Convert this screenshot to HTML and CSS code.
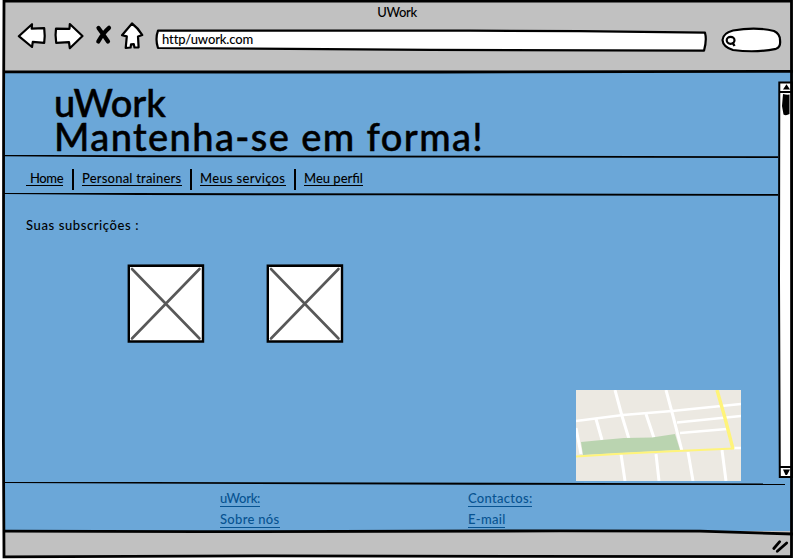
FILE: index.html
```html
<!DOCTYPE html>
<html lang="pt">
<head>
<meta charset="utf-8">
<title>UWork</title>
<link rel="stylesheet" href="styles.css">
</head>
<body>
<div class="window">
  <header class="chrome">
    <div class="title">UWork</div>
    <div class="toolbar">
      <svg class="nav-icons" width="130" height="30" viewBox="16 21 130 30">
        <g fill="#fff" stroke="#000" stroke-width="2.2" stroke-linejoin="round">
          <path d="M18.8 36.2 32 24.2 31.7 28.7 44.2 28.2Q45.2 36 44.2 42.8L32.8 41.8 32 47Z"/>
          <path d="M56 28.7 69.5 28.8 69.8 24 82.5 36 69.8 48.2 69 42.2 56.2 42.8Q55 35 56 28.7Z"/>
          <path d="M132 23.5Q138 28 142.3 35L138 36.5 138.6 47.3 134.5 47.5 133.8 44.2 131 44.3 130.6 47.5 125.7 48 126.8 36.4 122 35.2Z"/>
        </g>
        <path d="M98.5 28Q103 34 108 41.5M109 27.8Q103 33 98.3 41.5" fill="none" stroke="#000" stroke-width="4.2" stroke-linecap="round"/>
      </svg>
      <div class="url">
        <svg class="shape" width="554" height="26" viewBox="154 27 554 26"><path d="M158 30.7 H470 L580 31.2 705 32.7Q707 40 704 50.7L430 49.8 158 48Q155 39 158 30.7Z" fill="#fff" stroke="#000" stroke-width="2.2" stroke-linejoin="round"/></svg>
        <span>http/uwork.com</span>
      </div>
      <svg class="search" width="62" height="28" viewBox="720 26 62 28">
        <path d="M733 30.5Q756 26.5 774 31Q780 34 780 40 781 47 776 48.8 756 53 733 50 723 47 722.5 40 723 33 733 30.5Z" fill="#fff" stroke="#000" stroke-width="2.2"/>
        <ellipse cx="730.6" cy="40.3" rx="3.9" ry="3.5" fill="none" stroke="#000" stroke-width="2.2"/><path d="M732.5 42.5 734.5 46" stroke="#000" stroke-width="2.4"/>
      </svg>
    </div>
  </header>
  <div class="viewport">
    <main class="page">
      <h1><span class="brand">uWork</span><br>Mantenha-se em forma!</h1>
      <svg class="rule" width="774" height="4" viewBox="5 154 774 4"><path d="M5 155H40L780 156.3V158L400 157.4 140 157.2 5 156.2Z"/></svg>
      <nav>
        <a class="home">Home</a><i></i><a class="trainers">Personal trainers</a><i></i><a class="services">Meus serviços</a><i></i><a class="profile">Meu perfil</a>
      </nav>
      <svg class="rule" width="774" height="4" viewBox="5 192 774 4"><path d="M5 193H130L780 194V195.8L400 195.3 140 195 5 194.1Z"/></svg>
      <p>Suas subscrições :</p>
      <div class="pictures">
        <svg width="78" height="80" viewBox="0 0 78 80"><path d="M1.8 1.8 76 1.5 76 77.5H1.8Z" fill="#fff" stroke="#000" stroke-width="2.4"/><path d="M5 5 72.5 74.5M72.5 5 5 74.5" stroke="#585858" stroke-width="2.6" stroke-linecap="round"/></svg>
        <svg width="78" height="80" viewBox="0 0 78 80"><path d="M1.8 1.8 76 1.5 76 77.5H1.8Z" fill="#fff" stroke="#000" stroke-width="2.4"/><path d="M5 5 72.5 74.5M72.5 5 5 74.5" stroke="#585858" stroke-width="2.6" stroke-linecap="round"/></svg>
      </div>
      <svg class="map" width="165" height="91" viewBox="0 0 165 91">
        <rect width="165" height="91" fill="#ece9e2"/>
        <g fill="none" stroke="#fff" stroke-width="3">
          <path stroke-width="2.3" d="M0 31 47 25 96 21 165 14M101 32.5 165 26M104 43 151 39M158 58H165"/>
          <path d="M39 0 46 26 53 49M90 0 97 26 106 61M20 29 26 50M70 24 78 48M0 38 5 64M45 64 49 91M80 64 83 91M112 62 117 91M146 60 150 91"/>
        </g>
        <path d="M5 52 26 50 48 48 76 47.5 99 44 104 60 7 65Z" fill="#bad4b0"/>
        <path d="M0 66.5 40 64 90 61.5 158 58.5" fill="none" stroke="#fff47a" stroke-width="2.2"/>
        <path d="M141 0 149 28 157 59" fill="none" stroke="#fff47a" stroke-width="3.4"/>
      </svg>
    </main>
    <svg class="scrollbar" width="15" height="399" viewBox="778 80 15 399">
      <path d="M779.3 82.5H792V477H779.8L779 280Z" fill="#fff" stroke="#000" stroke-width="2"/>
      <path d="M779 92H792M779 467H792" stroke="#000" stroke-width="1.8"/>
      <path d="M783 89.5 786.5 84.2 790 89.5ZM783 469.5H790L787 475H785.5Z"/>
      <path d="M783 94Q787 95 789.5 94.5V114Q786 116 783.5 114.5L782 106Z"/>
    </svg>
  </div>
  <footer>
    <svg class="rule" width="782" height="4" viewBox="5 481 782 4"><path d="M5 482H150L786 483.5V485L480 484.7 5 483Z"/></svg>
    <div class="links">
      <div><a class="about">uWork:</a><a class="us">Sobre nós</a></div>
      <div><a class="contacts">Contactos:</a><a class="mail">E-mail</a></div>
    </div>
  </footer>
  <div class="status"><svg width="18" height="15" viewBox="771 539 18 15"><path d="M773.8 548.5 779.7 541.7M777.3 551.3 786.7 543" fill="none" stroke="#000" stroke-width="2.8" stroke-linecap="round"/></svg></div>
  <svg class="outline" width="793" height="559" viewBox="0 0 793 559">
    <g fill="none" stroke="#000" stroke-width="2.8">
      <path d="M4 1.2H791.5L791.6 280 791.5 556.6 520 556.4 270 555.8 4 556.8 3.4 440 3.6 100Z"/>
      <path d="M4 71.8 250 72 440 72 793 71.4M4 531.2 200 531.7 560 530.9 700 531.1 793 534"/>
    </g>
  </svg>
</div>
</body>
</html>
```

FILE: styles.css
```css
* { box-sizing: border-box; }
body { margin: 0; background: #fff; color: #000; font: 500 13px/16px Lato, "Noto Sans", sans-serif; }
svg { display: block; flex: none; }
.window { position: relative; width: 793px; height: 559px; display: flex; flex-direction: column; overflow: hidden; }
.chrome { height: 72px; margin-left: 4px; background: #c1c1c1; }
.title { height: 21px; padding: 4px 3px 0 0; text-align: center; letter-spacing: -.3px; }
.toolbar { display: flex; padding-left: 12px; }
.url { position: relative; width: 554px; height: 26px; margin: 6px 12px 0 8px; }
.url .shape { position: absolute; inset: 0; }
.url span { position: relative; display: block; padding: 4px 0 0 8px; letter-spacing: -.13px; }
.search { margin-top: 5px; }
.viewport { display: flex; height: 409px; margin-left: 4px; background: #6ba7d8; }
.page { width: 774px; display: flex; flex-direction: column; }
h1 { height: 82px; margin: 0; padding: 13px 0 0 50px; font-size: 38px; line-height: 34px; font-weight: 500; letter-spacing: 1.4px; white-space: nowrap; -webkit-text-stroke: .5px #000; }
.brand { letter-spacing: -.1px; }
.rule { width: auto; align-self: flex-start; }
nav { display: flex; height: 34px; padding: 11px 0 0 22px; }
nav i { width: 2px; height: 21px; background: #000; margin: 0 8px; }
nav a { height: 17px; line-height: 18px; border-bottom: 1px solid #000; white-space: nowrap; letter-spacing: .3px; }
.home { width: 37px; padding-left: 4px; margin-right: 1px; }
nav .home { letter-spacing: -.4px; }
.trainers { width: 100px; }
nav .trainers { letter-spacing: .2px; }
.services { width: 86px; }
.profile { width: 59px; }
nav .profile { letter-spacing: 0; }
p { margin: 21px 0 0 22px; height: 16px; letter-spacing: .6px; }
.pictures { display: flex; gap: 61px; margin: 31px 0 0 123px; }
.map { margin: 46px 0 0 572px; }
.scrollbar { margin-top: 8px; }
footer { height: 50px; margin-left: 4px; background: #6ba7d8; }
.links { display: flex; padding: 6px 0 0 216px; color: #075391; }
.links div { width: 248px; display: flex; flex-direction: column; align-items: flex-start; gap: 5px; }
.links a { height: 16px; line-height: 15px; border-bottom: 1px solid #075391; white-space: nowrap; letter-spacing: .3px; }
.about { width: 40px; }
.links .about { letter-spacing: -.25px; }
.us { width: 60px; }
.contacts { width: 64px; }
.mail { width: 37px; }
.status { height: 26px; margin-left: 4px; background: #c1c1c1; padding: 8px 0 0 767px; }
.outline { position: absolute; inset: 0; pointer-events: none; }
```
